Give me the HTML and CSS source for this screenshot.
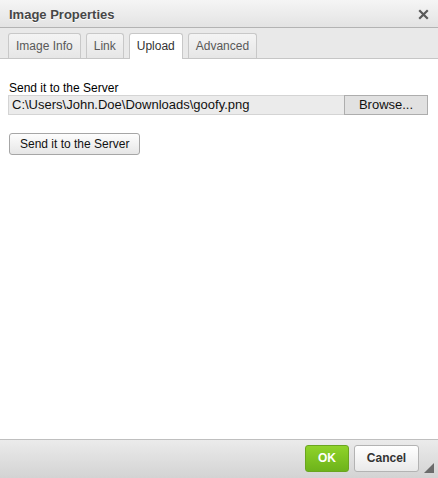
FILE: index.html
```html
<!DOCTYPE html>
<html>
<head>
<meta charset="utf-8">
<link rel="stylesheet" href="styles.css">
</head>
<body>
<div class="dialog">
  <div class="titlebar">
    <span class="title">Image Properties</span>
    <span class="close" aria-label="close">
      <svg width="11" height="11" viewBox="0 0 11 11"><path d="M2 2 L9 9 M9 2 L2 9" stroke="#5a5a5a" stroke-width="2.2" stroke-linecap="square"/></svg>
    </span>
  </div>
  <div class="tabs">
    <span class="tab">Image Info</span>
    <span class="tab">Link</span>
    <span class="tab active">Upload</span>
    <span class="tab">Advanced</span>
  </div>
  <div class="content">
    <div class="label">Send it to the Server</div>
    <div class="filerow">
      <div class="filepath">C:\Users\John.Doe\Downloads\goofy.png</div>
      <div class="browse">Browse...</div>
    </div>
    <div class="sendrow"><span class="send">Send it to the Server</span></div>
  </div>
  <div class="footer">
    <span class="btn ok">OK</span>
    <span class="btn cancel">Cancel</span>
    <span class="grip"></span>
  </div>
</div>
</body>
</html>
```
FILE: styles.css
```css
html, body { margin: 0; padding: 0; }
body { font-family: "Liberation Sans", Arial, sans-serif; background: #fff; }
.dialog { width: 438px; height: 478px; display: flex; flex-direction: column; }
.titlebar {
  height: 27px; border-bottom: 1px solid #b3b3b3;
  background: linear-gradient(#f5f5f5, #e3e3e3);
  display: flex; align-items: center; justify-content: space-between;
  padding: 0 9px 0 9px; box-sizing: content-box;
}
.title { font-size: 13px; font-weight: bold; color: #474747; text-shadow: 0 1px 0 #fff; padding-top: 1px; }
.close { display: flex; width: 11px; height: 11px; margin-top: 2px; }
.tabs {
  height: 30px; background: #e9e9e9; border-bottom: 1px solid #c6c6c6;
  display: flex; align-items: flex-end; gap: 5px; padding-left: 8px; box-sizing: content-box;
}
.tab {
  height: 24px; line-height: 24px; padding: 0 7px;
  border: 1px solid #c8c8c8; border-bottom: none; border-radius: 3px 3px 0 0;
  background: linear-gradient(#f4f4f4, #e6e6e6); font-size: 12px; color: #595959;
  margin-bottom: 0;
}
.tab.active { background: #fff; color: #333; height: 25px; margin-bottom: -1px; }
.content { flex: 1; padding: 23px 10px 0 8px; font-size: 12px; color: #000; }
.label { font-size: 12px; line-height: 13px; padding-left: 1px; }
.filerow { display: flex; margin-top: 0; height: 20px; }
.filepath {
  flex: 1; background: #ebebeb; border: 1px solid #d4d4d4; border-right: none;
  font-size: 13px; line-height: 18px; padding-left: 3px; color: #111;
}
.browse {
  width: 82px; border: 1px solid #adadad; background: #e1e1e1;
  font-size: 13px; line-height: 18px; text-align: center; color: #111;
}
.sendrow { margin-top: 18px; display: flex; padding-left: 1px; }
.send {
  height: 20px; line-height: 20px; padding: 0 10px; font-size: 12px; color: #111;
  border: 1px solid #a6a6a6; border-radius: 3px;
  background: linear-gradient(#fdfdfd, #e6e6e6);
}
.footer {
  height: 38px; border-top: 1px solid #bfbfbf;
  background: linear-gradient(#ebebeb, #d3d3d3);
  display: flex; align-items: center; justify-content: flex-end; gap: 5px;
  padding-right: 19px; position: relative; box-sizing: content-box;
}
.btn {
  height: 25px; line-height: 25px; border-radius: 3px; font-size: 12px; font-weight: bold;
  text-align: center; margin-top: -2px;
}
.ok { width: 42px; color: #fff; background: linear-gradient(#8fd32a, #6db31b); border: 1px solid #6aa520; }
.cancel { width: 63px; color: #333; background: linear-gradient(#fff, #e9e9e9); border: 1px solid #b3b3b3; }
.grip {
  position: absolute; right: 4px; bottom: 5px; width: 0; height: 0;
  border-left: 10px solid transparent; border-bottom: 10px solid #6b6b6b;
}
```
